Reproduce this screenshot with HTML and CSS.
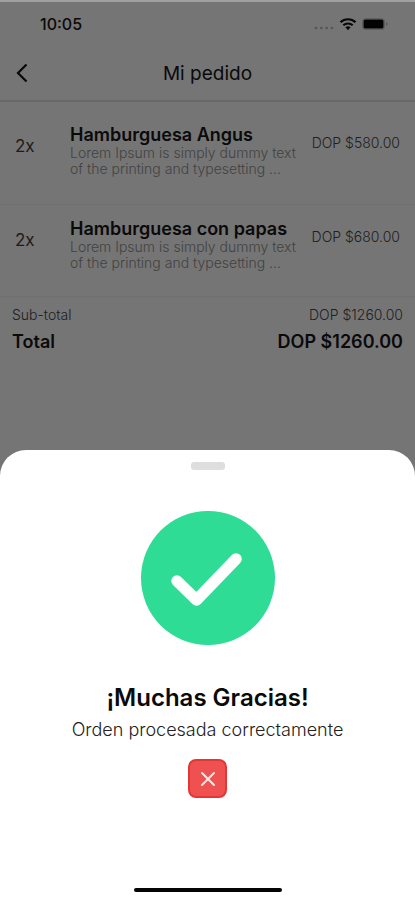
FILE: index.html
```html
<!DOCTYPE html>
<html lang="es">
<head>
<meta charset="utf-8">
<meta name="viewport" content="width=device-width, initial-scale=1">
<title>Mi pedido</title>
<link rel="stylesheet" href="styles.css">
</head>
<body>
<div class="order">
  <div class="status">
    <span class="time">10:05</span>
    <svg class="status-icons" width="74" height="16" viewBox="0 0 74 16" aria-hidden="true">
      <g fill="#555"><circle cx="2" cy="12" r="1.3"/><circle cx="7.300" cy="12" r="1.3"/><circle cx="12.600" cy="12" r="1.3"/><circle cx="17.900" cy="12" r="1.3"/></g>
      <g fill="none" stroke="#080808" stroke-width="2.200"><path d="M26.500 6.200a11 11 0 0 1 15 0"/><path d="M29.300 9.300a7 7 0 0 1 9.400 0"/></g>
      <path d="M31.400 11.300a4 4 0 0 1 5.200 0L34 14.200z" fill="#080808"/>
      <rect x="48.500" y="2.500" width="22" height="11" rx="3" fill="none" stroke="#606060"/>
      <rect x="49.500" y="3.500" width="20" height="9" rx="1.500" fill="#030303"/>
      <path d="M72 6.200v3.600q1.500-.5 1.500-1.800T72 6.200" fill="#555"/>
    </svg>
  </div>
  <header class="nav">
    <button class="back" type="button" aria-label="Volver">
      <svg width="12" height="20" viewBox="0 0 12 20" aria-hidden="true"><path d="M10.500 1.500L2 10l8.500 8.500" fill="none" stroke="#080808" stroke-width="2.200"/></svg>
    </button>
    <h1>Mi pedido</h1>
  </header>
  <main>
    <ul class="items">
      <li class="item">
        <span class="qty">2x</span>
        <div class="info"><h2>Hamburguesa Angus</h2><p>Lorem Ipsum is simply dummy text of the printing and typesetting ...</p></div>
        <span class="price">DOP $580.00</span>
      </li>
      <li class="item">
        <span class="qty">2x</span>
        <div class="info"><h2>Hamburguesa con papas</h2><p>Lorem Ipsum is simply dummy text of the printing and typesetting ...</p></div>
        <span class="price">DOP $680.00</span>
      </li>
    </ul>
    <dl class="totals">
      <div class="subtotal"><dt>Sub-total</dt><dd>DOP $1260.00</dd></div>
      <div class="total"><dt>Total</dt><dd>DOP $1260.00</dd></div>
    </dl>
  </main>
</div>
<section class="sheet" role="dialog" aria-labelledby="thanks">
  <div class="handle"></div>
  <svg class="check" width="134" height="134" viewBox="0 0 134 134" aria-hidden="true">
    <circle cx="67" cy="67" r="67" fill="#2edc96"/>
    <path d="M36 70l19.500 19L95 48" fill="none" stroke="#fff" stroke-width="11.500" stroke-linecap="round" stroke-linejoin="round"/>
  </svg>
  <h2 id="thanks">¡Muchas Gracias!</h2>
  <p>Orden procesada correctamente</p>
  <button class="close" type="button" aria-label="Cerrar">
    <svg width="16" height="16" viewBox="0 0 16 16" aria-hidden="true"><path d="M2 2l12 12M14 2L2 14" stroke="#ffe9e9" stroke-width="2" stroke-linecap="round"/></svg>
  </button>
  <div class="home"></div>
</section>
</body>
</html>
```
FILE: styles.css
```css
* {
  box-sizing: border-box;
  margin: 0;
  padding: 0;
}

body {
  min-height: 100vh;
  display: flex;
  flex-direction: column;
  background: #757575;
  color: #0a0a0a;
  font-family: Inter, "Liberation Sans", sans-serif;
}

button {
  border: 0;
  background: none;
  display: flex;
  align-items: center;
  justify-content: center;
}

.order {
  flex: 1;
  border-top: 2px solid #a0a0a0;
}

.status {
  height: 44px;
  display: flex;
  align-items: center;
  justify-content: space-between;
  padding: 0 27px 0 40px;
}

.time {
  font-size: 16px;
  font-weight: 500;
}

.nav {
  height: 56px;
  display: grid;
  grid-template-columns: 44px 1fr 44px;
  align-items: center;
  border-bottom: 2px solid #686868;
}

.back {
  height: 44px;
}

.nav h1 {
  font-size: 19px;
  font-weight: 400;
  text-align: center;
}

.items {
  list-style: none;
}

.item {
  display: flex;
  align-items: flex-start;
  padding: 23px 15px 27px;
  border-bottom: 1px solid #707070;
}

.item + .item {
  padding: 14px 15px 25px;
}

.qty {
  width: 55px;
  padding-top: 10px;
  font-size: 17px;
  line-height: 22px;
  color: #1c1c1c;
}

.info {
  flex: 1;
}

.info h2 {
  font-size: 18px;
  line-height: 20px;
  font-weight: 600;
}

.info p {
  max-width: 230px;
  font-size: 14px;
  line-height: 16px;
  font-weight: 300;
  color: #424242;
}

.price {
  padding-top: 8px;
  font-size: 14px;
  line-height: 20px;
  font-weight: 300;
  color: #202020;
  white-space: nowrap;
}

.totals {
  padding: 7px 12px;
}

.totals div {
  display: flex;
  justify-content: space-between;
}

.subtotal {
  font-size: 14px;
  line-height: 22px;
  font-weight: 300;
  color: #202020;
}

.total {
  font-size: 18px;
  line-height: 32px;
  font-weight: 600;
}

.sheet {
  display: flex;
  flex-direction: column;
  align-items: center;
  padding: 12px 16px 8px;
  border-radius: 26px 26px 0 0;
  background: #fff;
}

.handle {
  width: 34px;
  height: 8px;
  border-radius: 3px;
  background: #dedede;
}

.check {
  margin: 41px 0 37px;
}

.sheet h2 {
  font-size: 24px;
  line-height: 32px;
  font-weight: 600;
}

.sheet p {
  font-size: 18px;
  line-height: 32px;
  font-weight: 300;
  color: #222;
}

.close {
  width: 39px;
  height: 39px;
  margin: 13px 0 90px;
  border: 2px solid #e53535;
  border-radius: 8px;
  background: #ef5050;
}

.home {
  width: 148px;
  height: 4px;
  border-radius: 2px;
  background: #050505;
}
```
